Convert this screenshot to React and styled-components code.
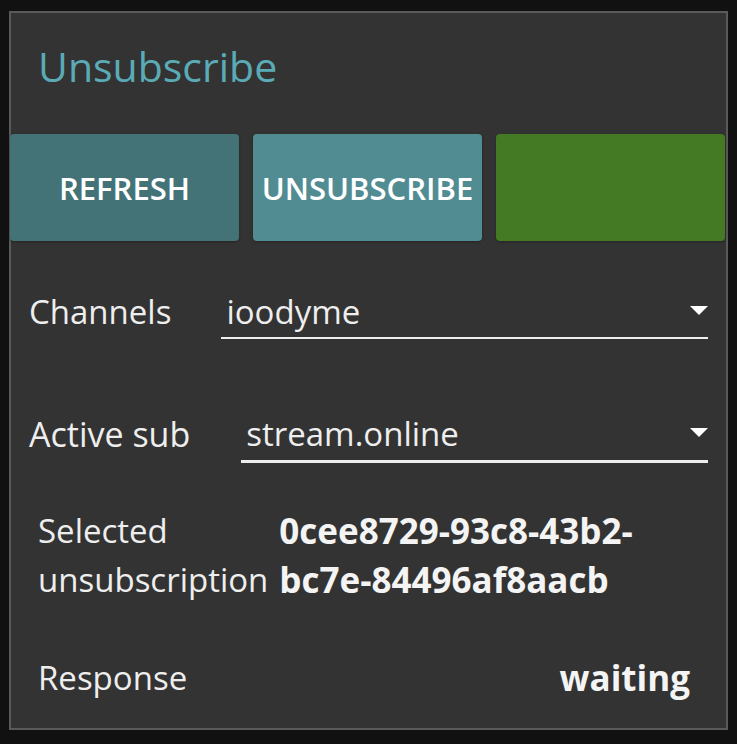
import styled, { createGlobalStyle } from "styled-components";

const GlobalStyle = createGlobalStyle`
  body {
    margin: 0;
    background: #111111;
    font-family: "Open Sans", "Noto Sans", sans-serif;
  }
`;

const Panel = styled.div`
  box-sizing: border-box;
  width: 719px;
  height: 719px;
  margin: 11px 0 0 9px;
  border: 2px solid #5a5a5a;
  background: #333333;
  color: #eeeeee;
  display: flex;
  flex-direction: column;
`;

const Title = styled.h1`
  margin: 25px 0 0 27px;
  font-size: 41px;
  line-height: 56px;
  font-weight: 400;
  color: #5aabb6;
`;

const ButtonRow = styled.div`
  display: grid;
  grid-template-columns: repeat(3, 1fr);
  gap: 14px;
  margin: 40px 1px 0 -1px;
`;

const ActionButton = styled.button`
  height: 107px;
  border: none;
  border-radius: 4px;
  background: ${(p) => p.$bg};
  color: #ffffff;
  font-family: "Open Sans", "Noto Sans", sans-serif;
  font-size: 31px;
  font-weight: 600;
  padding: 0;
  box-shadow: 0 1px 3px rgba(0, 0, 0, 0.3);
`;

const FieldRow = styled.div`
  display: flex;
  align-items: flex-start;
  margin: ${(p) => p.$top}px 18px 0 18px;
`;

const FieldLabel = styled.span`
  font-size: ${(p) => p.$size || 33}px;
  line-height: 44px;
  margin-right: ${(p) => p.$gap || 50}px;
  white-space: nowrap;
`;

const Select = styled.div`
  flex: 1;
  display: flex;
  align-items: center;
  justify-content: space-between;
  padding: 0 0 ${(p) => p.$pad}px 5px;
  border-bottom: ${(p) => p.$line}px solid #eeeeee;
  font-size: 33px;
  line-height: 44px;
`;

const Arrow = styled.span`
  width: 0;
  height: 0;
  border-left: 9px solid transparent;
  border-right: 9px solid transparent;
  border-top: 9px solid #ffffff;
  margin-top: -3px;
`;

const InfoRow = styled.div`
  display: flex;
  justify-content: space-between;
  gap: 11px;
  margin: ${(p) => p.$top}px 36px 0 27px;
  font-size: 33px;
  line-height: 49px;
`;

const InfoLabel = styled.span`
  width: ${(p) => (p.$narrow ? "min-content" : "auto")};
  flex-shrink: 0;
`;

const InfoValue = styled.span`
  flex: 1;
  font-size: 35px;
  font-weight: 700;
  color: #f4f4f4;
  text-align: ${(p) => p.$align || "left"};
`;

export default function App() {
  return (
    <>
      <GlobalStyle />
      <Panel>
        <Title>Unsubscribe</Title>
        <ButtonRow>
          <ActionButton $bg="#437377">REFRESH</ActionButton>
          <ActionButton $bg="#528c93">UNSUBSCRIBE</ActionButton>
          <ActionButton $bg="#447a24"></ActionButton>
        </ButtonRow>
        <FieldRow $top={49}>
          <FieldLabel>Channels</FieldLabel>
          <Select $pad={3} $line={2}>
            <span>ioodyme</span>
            <Arrow />
          </Select>
        </FieldRow>
        <FieldRow $top={73}>
          <FieldLabel $size={34} $gap={51}>Active sub</FieldLabel>
          <Select $pad={4} $line={3}>
            <span>stream.online</span>
            <Arrow />
          </Select>
        </FieldRow>
        <InfoRow $top={43}>
          <InfoLabel $narrow>Selected unsubscription</InfoLabel>
          <InfoValue>0cee8729-93c8-43b2-bc7e-84496af8aacb</InfoValue>
        </InfoRow>
        <InfoRow $top={49}>
          <InfoLabel>Response</InfoLabel>
          <InfoValue $align="right">waiting</InfoValue>
        </InfoRow>
      </Panel>
    </>
  );
}
